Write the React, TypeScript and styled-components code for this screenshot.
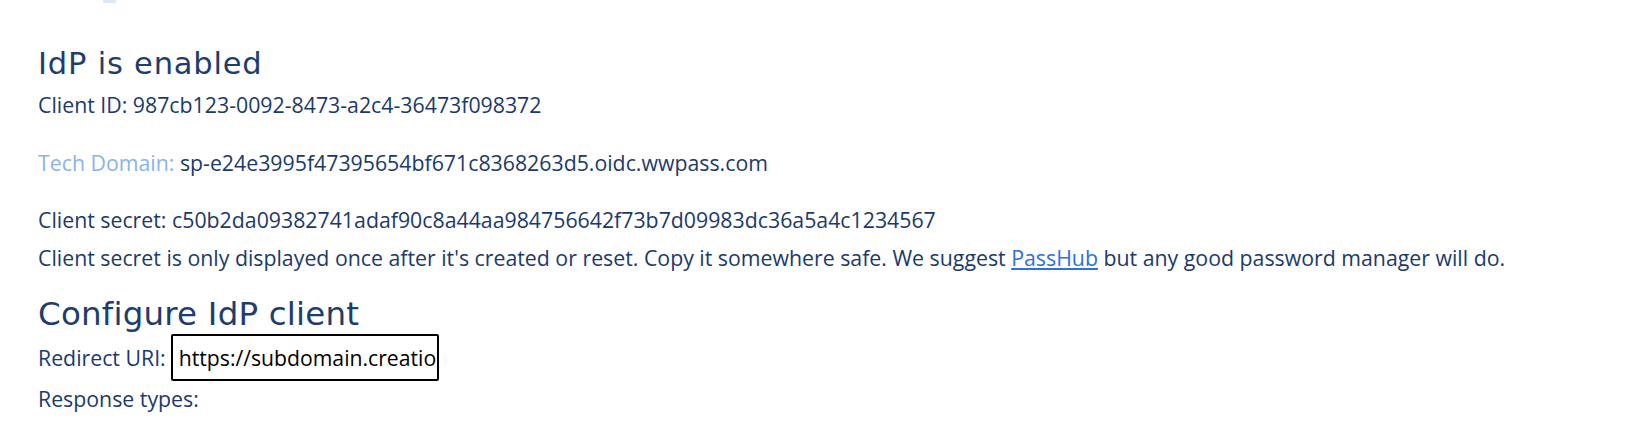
import styled, { createGlobalStyle } from 'styled-components';

const GlobalStyle = createGlobalStyle`
  body {
    margin: 0;
    background: #ffffff;
    font-family: "Open Sans", "Noto Sans", sans-serif;
    color: #1b3a6b;
  }
`;

const Page = styled.div`
  padding: 0 38px;
  display: flex;
  flex-direction: column;
`;

const TopMark = styled.div`
  width: 13px;
  height: 3px;
  margin-left: 103px;
  background: #dce8f8;
`;

const Heading = styled.h2<{ $size: number; $track: number; $gap: number }>`
  margin: ${(p) => p.$gap}px 0 0;
  font-family: "DejaVu Sans", "Lato", sans-serif;
  font-weight: 400;
  font-size: ${(p) => p.$size}px;
  letter-spacing: ${(p) => p.$track}px;
  line-height: 40px;
  color: #1e3d6e;
`;

const Line = styled.p<{ $gap?: number }>`
  margin: ${(p) => p.$gap || 0}px 0 0;
  font-size: 21.3px;
  line-height: 28px;
  color: #1b3a6b;
`;

const Muted = styled.span`
  color: #8ab2ec;
`;

const Link = styled.a`
  color: #2f6fe0;
  text-decoration: underline;
`;

const Field = styled.div`
  display: flex;
  align-items: center;
  gap: 5px;
  font-size: 21.3px;
`;

const UriInput = styled.input`
  width: 268px;
  height: 47px;
  box-sizing: border-box;
  border: 2px solid #000;
  border-radius: 2px;
  padding: 0 1px 0 6px;
  font-family: "Open Sans", sans-serif;
  font-size: 21.2px;
  color: #000;
  outline: none;
`;

export default function App() {
  return (
    <>
      <GlobalStyle />
      <TopMark />
      <Page>
        <Heading $size={30.5} $track={0.8} $gap={41}>IdP is enabled</Heading>
        <Line $gap={7}>Client ID: 987cb123-0092-8473-a2c4-36473f098372</Line>
        <Line $gap={30}>
          <Muted>Tech Domain:</Muted> sp-e24e3995f47395654bf671c8368263d5.oidc.wwpass.com
        </Line>
        <Line $gap={29}>Client secret: c50b2da09382741adaf90c8a44aa984756642f73b7d09983dc36a5a4c1234567</Line>
        <Line $gap={10}>
          Client secret is only displayed once after it's created or reset. Copy it somewhere safe. We suggest{' '}
          <Link href="#">PassHub</Link> but any good password manager will do.
        </Line>
        <Heading $size={32.5} $track={0.2} $gap={22}>Configure IdP client</Heading>
        <Field>
          <span>Redirect URI:</span>
          <UriInput defaultValue="https://subdomain.creatio" />
        </Field>
        <Line $gap={4}>Response types:</Line>
      </Page>
    </>
  );
}
